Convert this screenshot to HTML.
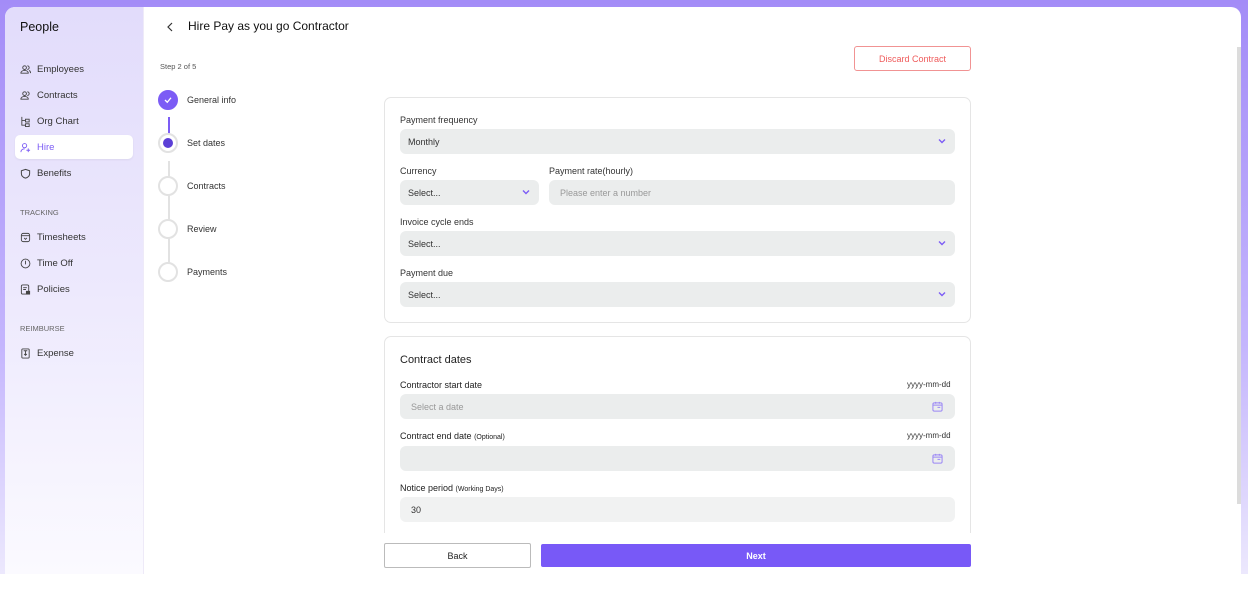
<!DOCTYPE html>
<html><head><style>
*{box-sizing:border-box;margin:0;padding:0}
body{width:1248px;height:604px;background:#fff;font-family:"Liberation Sans",sans-serif;position:relative;overflow:hidden;color:#1f2937}
.bg{position:absolute;left:0;top:0;width:1248px;height:574px;background:linear-gradient(180deg,#a38cf7 0%,#c4b5fd 60%,#ece8fd 100%)}
.card{position:absolute;left:5px;top:7px;width:1236px;height:567px;background:#fff;border-radius:10px 10px 0 0;overflow:hidden}
.side{position:absolute;left:0;top:0;width:139px;height:567px;background:linear-gradient(180deg,#e2dcfb 0%,#ede9fd 50%,#fbfaff 100%);border-right:1px solid #eeeaf8}
.side .t{position:absolute;left:15px;top:13px;font-size:12.5px;color:#111}
.nav{position:absolute;left:15px;font-size:9.5px;color:#333;display:flex;align-items:center;gap:6px}
.nav svg{width:11px;height:11px}
.sec{position:absolute;left:15px;font-size:7.5px;color:#666}
.hire{position:absolute;left:10px;top:128px;width:118px;height:24px;background:#fff;border-radius:5px;box-shadow:0 1px 2px rgba(0,0,0,.06)}
.abs{position:absolute}
.lbl{position:absolute;font-size:9px;color:#333}
.fld{position:absolute;background:#ebeded;border-radius:6px;font-size:9px;color:#333;padding-left:8px;display:flex;align-items:center}
.chev{position:absolute;right:9px;top:9px;width:8px;height:6px}
.box{position:absolute;border:1px solid #e5e5e5;border-radius:7px;background:#fff}
.step{position:absolute;left:153px;width:20px;height:20px;border-radius:50%;border:2px solid #e2e2e2;background:#fff}
.stxt{position:absolute;left:182px;font-size:9px;color:#333}
.cal{position:absolute;right:12px;top:7px;width:11px;height:11px}
</style></head><body>
<div class="bg"></div>
<div class="card">
 <div class="side">
  <div class="t">People</div>
  <div class="hire"></div>
  <div class="nav" style="top:57px"><svg viewBox="0 0 12 12" fill="none" stroke="#444" stroke-width="1"><circle cx="5" cy="4" r="2"/><path d="M1 10c0-2 2-3 4-3s4 1 4 3z"/><path d="M8 2a2 2 0 010 4M10 7c1 .5 1.5 1.5 1.5 3"/></svg>Employees</div>
  <div class="nav" style="top:83px"><svg viewBox="0 0 12 12" fill="none" stroke="#444" stroke-width="1"><circle cx="5" cy="4" r="2"/><path d="M1 10c0-2 2-3 4-3s4 1 4 3z"/><path d="M8 2a2 2 0 010 4"/></svg>Contracts</div>
  <div class="nav" style="top:109px"><svg viewBox="0 0 12 12" fill="none" stroke="#444" stroke-width="1"><path d="M2 1v9h4M2 5h4"/><rect x="6" y="3.5" width="4" height="3"/><rect x="6" y="8.5" width="4" height="3"/></svg>Org Chart</div>
  <div class="nav" style="top:135px;color:#7c5cf5"><svg viewBox="0 0 12 12" fill="none" stroke="#7c5cf5" stroke-width="1"><circle cx="5" cy="4" r="2.3"/><path d="M1 11c0-2.5 2-3.5 4-3.5M9 7v4M7 9h4"/></svg>Hire</div>
  <div class="nav" style="top:161px"><svg viewBox="0 0 12 12" fill="none" stroke="#444" stroke-width="1.1"><path d="M6 1.5l4.5 1.5v3c0 3-2.5 4.5-4.5 5-2-.5-4.5-2-4.5-5V3z"/></svg>Benefits</div>
  <div class="sec" style="top:201px">TRACKING</div>
  <div class="nav" style="top:225px"><svg viewBox="0 0 12 12" fill="none" stroke="#444" stroke-width="1"><rect x="1.5" y="1.5" width="9" height="9" rx="2"/><path d="M1.5 4h9M4.5 6.5l1.5 1.5 1.5-1.5"/></svg>Timesheets</div>
  <div class="nav" style="top:251px"><svg viewBox="0 0 12 12" fill="none" stroke="#444" stroke-width="1"><circle cx="6" cy="6" r="4.8"/><path d="M6 3v4"/></svg>Time Off</div>
  <div class="nav" style="top:277px"><svg viewBox="0 0 12 12" fill="none" stroke="#444" stroke-width="1"><rect x="1.5" y="1" width="8" height="10" rx="1.5"/><path d="M3.5 4h4M3.5 6h3"/><rect x="7" y="8" width="3.5" height="3" fill="#444"/></svg>Policies</div>
  <div class="sec" style="top:317px">REIMBURSE</div>
  <div class="nav" style="top:341px"><svg viewBox="0 0 12 12" fill="none" stroke="#444" stroke-width="1"><rect x="2" y="1" width="8" height="10" rx="1"/><path d="M6 3v5M4.5 6.5L6 8l1.5-1.5M4 3h4"/></svg>Expense</div>
 </div>
 <svg class="abs" style="left:161px;top:14px;width:8px;height:12px" viewBox="0 0 8 12" fill="none" stroke="#333" stroke-width="1.2"><path d="M6 2L2 6l4 4"/></svg>
 <div class="abs" style="left:183px;top:12px;font-size:12px;color:#111">Hire Pay as you go Contractor</div>
 <div class="abs" style="left:155px;top:55px;font-size:7.5px;color:#555">Step 2 of 5</div>
 <div class="abs" style="left:849px;top:39px;width:117px;height:25px;border:1px solid #f19393;border-radius:3px;color:#ef5b5b;font-size:9px;display:flex;align-items:center;justify-content:center">Discard Contract</div>
 <div class="abs" style="left:163px;top:110px;width:2px;height:26px;background:#7c5cf5"></div>
 <div class="abs" style="left:163px;top:154px;width:2px;height:120px;background:#e2e2e2"></div>
 <div class="step" style="top:83px;background:#7c5cf5;border-color:#7c5cf5"><svg viewBox="0 0 16 16" style="position:absolute;left:2px;top:2px;width:12px;height:12px" fill="none" stroke="#fff" stroke-width="1.8"><path d="M4 8l3 3 5-6"/></svg></div>
 <div class="step" style="top:126px"><div class="abs" style="left:3px;top:3px;width:10px;height:10px;border-radius:50%;background:#5b3fd6"></div></div>
 <div class="step" style="top:169px"></div>
 <div class="step" style="top:212px"></div>
 <div class="step" style="top:255px"></div>
 <div class="stxt" style="top:88px">General info</div>
 <div class="stxt" style="top:131px">Set dates</div>
 <div class="stxt" style="top:174px">Contracts</div>
 <div class="stxt" style="top:217px">Review</div>
 <div class="stxt" style="top:260px">Payments</div>
 <div class="box" style="left:379px;top:90px;width:587px;height:226px"></div>
 <div class="lbl" style="left:395px;top:108px">Payment frequency</div>
 <div class="fld" style="left:395px;top:122px;width:555px;height:25px">Monthly<svg class="chev" viewBox="0 0 8 6" fill="none" stroke="#7c5cf5" stroke-width="1.4"><path d="M1 1.5l3 3 3-3"/></svg></div>
 <div class="lbl" style="left:395px;top:159px">Currency</div>
 <div class="fld" style="left:395px;top:173px;width:139px;height:25px">Select...<svg class="chev" viewBox="0 0 8 6" fill="none" stroke="#7c5cf5" stroke-width="1.4"><path d="M1 1.5l3 3 3-3"/></svg></div>
 <div class="lbl" style="left:544px;top:159px">Payment rate(hourly)</div>
 <div class="fld" style="left:544px;top:173px;width:406px;height:25px;color:#999;padding-left:11px">Please enter a number</div>
 <div class="lbl" style="left:395px;top:210px">Invoice cycle ends</div>
 <div class="fld" style="left:395px;top:224px;width:555px;height:25px">Select...<svg class="chev" viewBox="0 0 8 6" fill="none" stroke="#7c5cf5" stroke-width="1.4"><path d="M1 1.5l3 3 3-3"/></svg></div>
 <div class="lbl" style="left:395px;top:261px">Payment due</div>
 <div class="fld" style="left:395px;top:275px;width:555px;height:25px">Select...<svg class="chev" viewBox="0 0 8 6" fill="none" stroke="#7c5cf5" stroke-width="1.4"><path d="M1 1.5l3 3 3-3"/></svg></div>
 <div class="box" style="left:379px;top:329px;width:587px;height:260px"></div>
 <div class="abs" style="left:395px;top:347px;font-size:11px;color:#222">Contract dates</div>
 <div class="lbl" style="left:395px;top:373px;color:#222">Contractor start date</div>
 <div class="lbl" style="left:902px;top:373px;font-size:8px">yyyy-mm-dd</div>
 <div class="fld" style="left:395px;top:387px;width:555px;height:25px;color:#999;padding-left:11px">Select a date<svg class="cal" viewBox="0 0 12 12" fill="none" stroke="#9b87f5" stroke-width="1.1"><rect x="1" y="2" width="10" height="9" rx="1.5"/><path d="M1 4.5h10M4 1v2M8 1v2M6 7h3"/></svg></div>
 <div class="lbl" style="left:395px;top:424px;color:#222">Contract end date <span style="font-size:7px">(Optional)</span></div>
 <div class="lbl" style="left:902px;top:424px;font-size:8px">yyyy-mm-dd</div>
 <div class="fld" style="left:395px;top:439px;width:555px;height:25px"><svg class="cal" viewBox="0 0 12 12" fill="none" stroke="#9b87f5" stroke-width="1.1"><rect x="1" y="2" width="10" height="9" rx="1.5"/><path d="M1 4.5h10M4 1v2M8 1v2M6 7h3"/></svg></div>
 <div class="lbl" style="left:395px;top:476px;color:#222">Notice period <span style="font-size:7px">(Working Days)</span></div>
 <div class="fld" style="left:395px;top:490px;width:555px;height:25px;background:#f1f2f2;padding-left:11px">30</div>
 <div class="abs" style="left:374px;top:526px;width:600px;height:41px;background:#fff"></div>
 <div class="abs" style="left:379px;top:536px;width:147px;height:25px;border:1px solid #bbb;border-radius:2px;font-size:9px;display:flex;align-items:center;justify-content:center;color:#222">Back</div>
 <div class="abs" style="left:536px;top:537px;width:430px;height:23px;background:#7859f7;border-radius:2px;font-size:9px;font-weight:bold;color:#fff;display:flex;align-items:center;justify-content:center">Next</div>
 <div class="abs" style="left:1232px;top:40px;width:4px;height:457px;background:#dcdcdc"></div>
</div>
</body></html>
